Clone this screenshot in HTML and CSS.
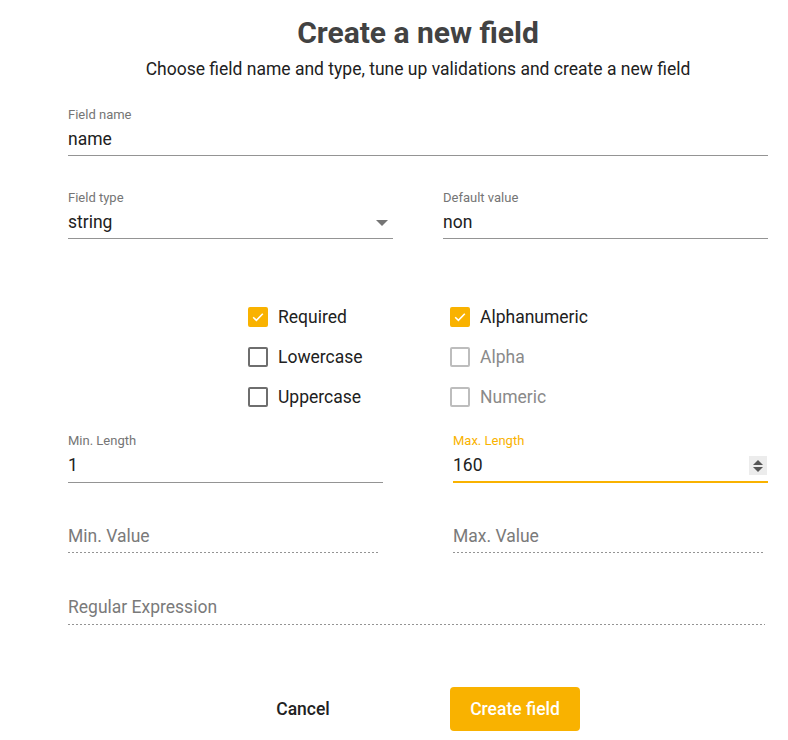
FILE: index.html
```html
<!DOCTYPE html>
<html>
<head>
<meta charset="utf-8">
<link rel="stylesheet" href="styles.css">
</head>
<body>
<div class="page">
  <h1 class="title">Create a new field</h1>
  <p class="subtitle">Choose field name and type, tune up validations and create a new field</p>

  <div class="field full">
    <div class="label">Field name</div>
    <div class="value">name</div>
  </div>

  <div class="row row-wide">
    <div class="field">
      <div class="label">Field type</div>
      <div class="value select">string<span class="arrow"></span></div>
    </div>
    <div class="field">
      <div class="label">Default value</div>
      <div class="value">non</div>
    </div>
  </div>

  <div class="checks">
    <div class="check"><span class="box checked"><svg viewBox="0 0 18 18" width="18" height="18"><path d="M4.2 9.3 L7.4 12.4 L13.8 5.8" fill="none" stroke="#fff" stroke-width="1.6"/></svg></span><span class="ctext">Required</span></div>
    <div class="check"><span class="box checked"><svg viewBox="0 0 18 18" width="18" height="18"><path d="M4.2 9.3 L7.4 12.4 L13.8 5.8" fill="none" stroke="#fff" stroke-width="1.6"/></svg></span><span class="ctext">Alphanumeric</span></div>
    <div class="check"><span class="box"></span><span class="ctext">Lowercase</span></div>
    <div class="check disabled"><span class="box"></span><span class="ctext">Alpha</span></div>
    <div class="check"><span class="box"></span><span class="ctext">Uppercase</span></div>
    <div class="check disabled"><span class="box"></span><span class="ctext">Numeric</span></div>
  </div>

  <div class="row row-narrow">
    <div class="field">
      <div class="label">Min. Length</div>
      <div class="value">1</div>
    </div>
    <div class="field focused">
      <div class="label">Max. Length</div>
      <div class="value number">160<span class="spinner"><span class="up"></span><span class="down"></span></span></div>
    </div>
  </div>

  <div class="row row-dis">
    <div class="field dis">
      <div class="value placeholder">Min. Value</div>
    </div>
    <div class="field dis">
      <div class="value placeholder">Max. Value</div>
    </div>
  </div>

  <div class="field dis regex">
    <div class="value placeholder">Regular Expression</div>
  </div>

  <div class="actions">
    <button class="btn cancel">Cancel</button>
    <button class="btn create">Create field</button>
  </div>
</div>
</body>
</html>
```

FILE: styles.css
```css
* { box-sizing: border-box; }
html, body { margin: 0; padding: 0; background: #fff; }
body { font-family: Roboto, "Noto Sans", sans-serif; color: #212121; }

.page {
  width: 700px;
  margin-left: 68px;
  padding-top: 14px;
}

.title {
  margin: 0;
  font-size: 30px;
  line-height: 38px;
  font-weight: 700;
  color: #424242;
  text-align: center;
}

.subtitle {
  margin: 0;
  margin-top: 5px;
  font-size: 17.5px;
  line-height: 24px;
  color: #212121;
  text-align: center;
}

.field {
  border-bottom: 1px solid #949494;
  padding-bottom: 4px;
}
.field.full { margin-top: 26px; }

.label {
  font-size: 13px;
  line-height: 16px;
  color: #757575;
}
.value {
  margin-top: 4px;
  font-size: 17.5px;
  line-height: 24px;
  color: #212121;
  position: relative;
}

.row { display: flex; }
.row-wide { gap: 50px; margin-top: 34px; }
.row-wide .field { flex: 1; }

.select .arrow {
  position: absolute;
  right: 5px;
  top: 10px;
  width: 0; height: 0;
  border-left: 6px solid transparent;
  border-right: 6px solid transparent;
  border-top: 6px solid #757575;
}

.checks {
  display: grid;
  grid-template-columns: 202px 200px;
  row-gap: 16px;
  margin-left: 180px;
  margin-top: 66px;
}
.check {
  display: flex;
  align-items: center;
  height: 24px;
  font-size: 17.5px;
  color: #212121;
}
.box {
  width: 20px;
  height: 20px;
  border: 2px solid #6e6e6e;
  border-radius: 2px;
  margin-right: 10px;
  display: flex;
  align-items: center;
  justify-content: center;
}
.box.checked { background: #f9b200; border-color: #f9b200; }
.box svg { display: block; flex: none; }
.check.disabled { color: #8a8a8a; }
.check.disabled .box { border-color: #bdbdbd; }

.row-narrow { justify-content: space-between; margin-top: 24px; }
.row-narrow .field { width: 315px; }
.field.focused { border-bottom: 2px solid #f9b200; padding-bottom: 4px; }
.field.focused .label { color: #f9b200; }

.number .spinner {
  position: absolute;
  right: 1px;
  top: 3px;
  width: 18px;
  height: 19px;
  background: #ececec;
  display: flex;
  flex-direction: column;
  align-items: center;
  justify-content: center;
  gap: 2px;
}
.spinner .up {
  width: 0; height: 0;
  border-left: 5px solid transparent;
  border-right: 5px solid transparent;
  border-bottom: 5px solid #555;
}
.spinner .down {
  width: 0; height: 0;
  border-left: 5px solid transparent;
  border-right: 5px solid transparent;
  border-top: 5px solid #555;
}

.field.dis {
  border-bottom: none;
  padding-bottom: 5px;
  background-image: linear-gradient(to right, rgba(0,0,0,0.42) 0%, rgba(0,0,0,0.42) 50%, transparent 50%);
  background-size: 4px 1px;
  background-repeat: repeat-x;
  background-position: bottom left;
}
.placeholder { color: #7a7a7a; margin-top: 0; }

.row-dis { gap: 73px; margin-top: 41px; }
.row-dis .field { width: 312px; }

.regex { width: 697px; margin-top: 42px; }
.field.dis.regex { padding-bottom: 6px; }

.actions {
  display: flex;
  margin-top: 62px;
  margin-left: 170px;
}
.btn {
  font-family: Roboto, "Noto Sans", sans-serif;
  font-size: 17.5px;
  font-weight: 500;
  border: none;
  border-radius: 4px;
  height: 44px;
  padding: 0;
  cursor: pointer;
}
.cancel {
  background: transparent;
  color: #212121;
  width: 130px;
  margin-right: 82px;
}
.create {
  background: #f9b200;
  color: #fff;
  width: 130px;
}
```
